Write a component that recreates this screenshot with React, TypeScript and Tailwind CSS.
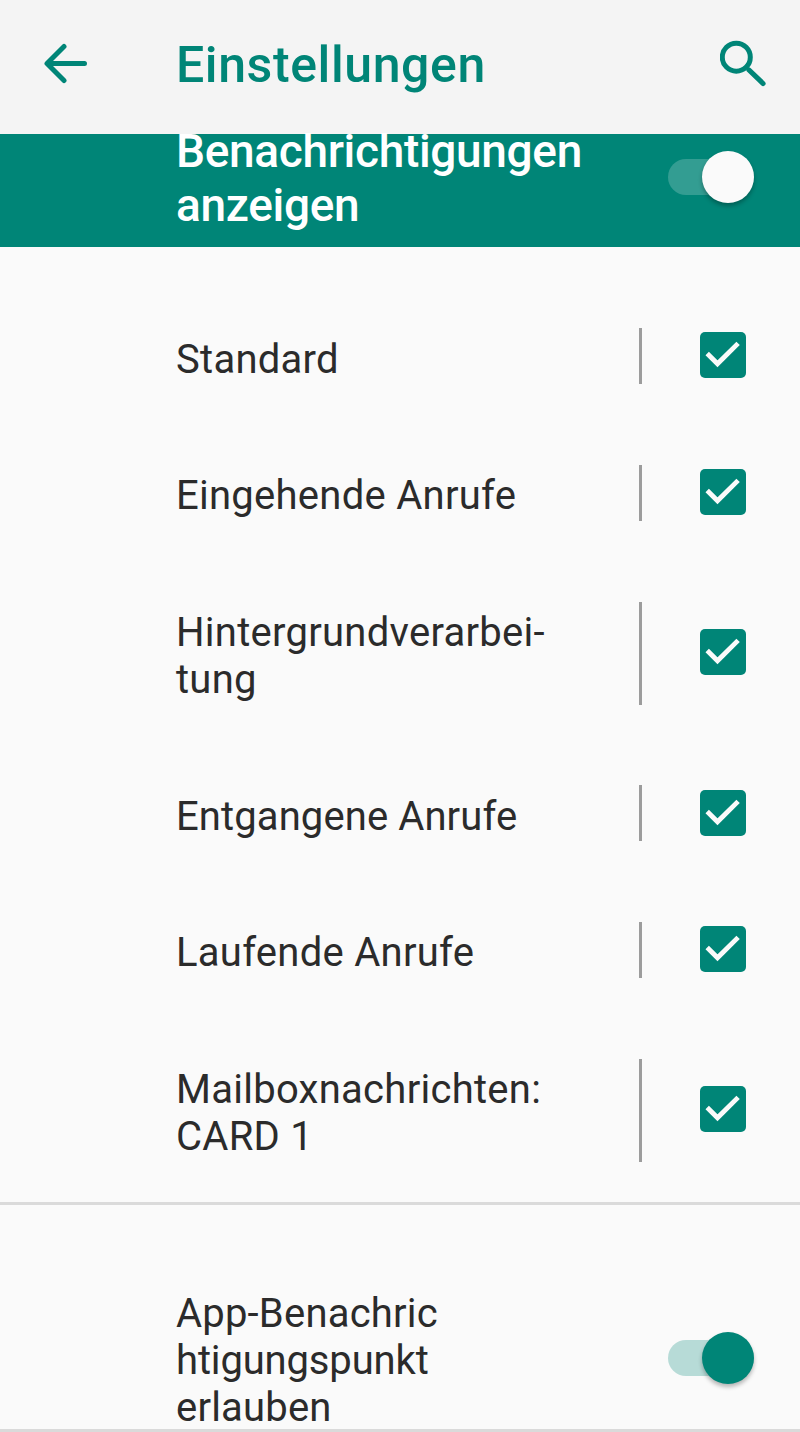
import React from 'react';

type Channel = { lines: string[]; tight?: boolean };

const channels: Channel[] = [
  { lines: ['Standard'] },
  { lines: ['Eingehende Anrufe'] },
  { lines: ['Hintergrundverarbei-', 'tung'] },
  { lines: ['Entgangene Anrufe'], tight: true },
  { lines: ['Laufende Anrufe'] },
  { lines: ['Mailboxnachrichten:', 'CARD 1'] },
];

function BackIcon() {
  return (
    <svg className="block w-[46px] h-[42px]" viewBox="0 0 46 42" fill="none" stroke="currentColor" strokeWidth="5" strokeLinecap="round" strokeLinejoin="round">
      <path d="M42.5 20.5H5.5M22 3.5L5 20.5L22 37.5" />
    </svg>
  );
}

function SearchIcon() {
  return (
    <svg className="block w-[48px] h-[48px]" viewBox="0 0 48 48" fill="none" stroke="currentColor" strokeLinecap="round">
      <circle cx="16.3" cy="17.2" r="14" strokeWidth="5" />
      <path d="M29 30L43 43.5" strokeWidth="5.2" />
    </svg>
  );
}

function Checkbox() {
  return (
    <div className="w-[46px] h-[46px] rounded-[5px] bg-[#008577]">
      <svg className="block w-full h-full" viewBox="0 0 46 46" fill="none" stroke="#fafafa" strokeWidth="4.8">
        <path d="M7.2 21.5L17.5 31.8L38.1 11.4" />
      </svg>
    </div>
  );
}

function Toggle({ light }: { light?: boolean }) {
  return (
    <div className={`flex items-center justify-end w-[86px] h-[36px] rounded-full ${light ? 'bg-[#339d92]' : 'bg-[#b7dbd7]'}`}>
      <div className={`w-[52px] h-[52px] shrink-0 rounded-full shadow-[0_3px_4px_rgba(0,0,0,0.28)] ${light ? 'bg-[#fafafa]' : 'bg-[#008577]'}`} />
    </div>
  );
}

function ChannelRow({ lines, tight }: Channel) {
  return (
    <div className="flex pl-[176px] pr-[54.5px] text-[40px] leading-[47.2px]">
      <div className={`flex-1 pt-[47.6px] pb-[41.85px] whitespace-nowrap ${tight ? 'tracking-[0.1px]' : 'tracking-[0.27px]'}`}>
        {lines.map((line) => (
          <div key={line}>{line}</div>
        ))}
      </div>
      <div className="w-[3px] my-[40.3px] bg-[#9c9c9c]" />
      <div className="flex items-center ml-[58px] pb-[1.8px]">
        <Checkbox />
      </div>
    </div>
  );
}

export default function App() {
  return (
    <div className="flex flex-col w-[800px] h-[1432px] overflow-hidden bg-[#fafafa] text-[#2b2b2b] font-['Roboto',sans-serif]">
      <header className="flex items-center h-[134px] shrink-0 pl-[42px] pr-[32px] pb-[7px] bg-[#f4f4f4] text-[#008577]">
        <BackIcon />
        <h1 className="flex-1 pl-[88px] pt-[2px] text-[50px] leading-[60px] font-medium tracking-[0.6px]">Einstellungen</h1>
        <SearchIcon />
      </header>

      {/* first line is scrolled partly under the header */}
      <section className="flex items-start justify-between h-[113px] shrink-0 pl-[176px] pr-[46px] bg-[#008577] text-white">
        <div className="-mt-[10px] text-[46px] leading-[54px] font-medium tracking-[-0.33px]">
          <div>Benachrichtigungen</div>
          <div>anzeigen</div>
        </div>
        <div className="pt-[25.4px]">
          <Toggle light />
        </div>
      </section>

      <main className="shrink-0 pt-[41px]">
        {channels.map((c) => (
          <ChannelRow key={c.lines[0]} {...c} />
        ))}
      </main>

      <section className="flex items-center justify-between shrink-0 h-[230px] border-y-[3px] border-[#dadada] pl-[176px] pr-[46px]">
        <div className="pt-[87px] text-[40px] leading-[47.2px] tracking-[0.2px]">
          <div>App-Benachric</div>
          <div className="tracking-[-0.15px]">htigungspunkt</div>
          <div>erlauben</div>
        </div>
        <div className="pt-[81px]">
          <Toggle />
        </div>
      </section>
    </div>
  );
}
